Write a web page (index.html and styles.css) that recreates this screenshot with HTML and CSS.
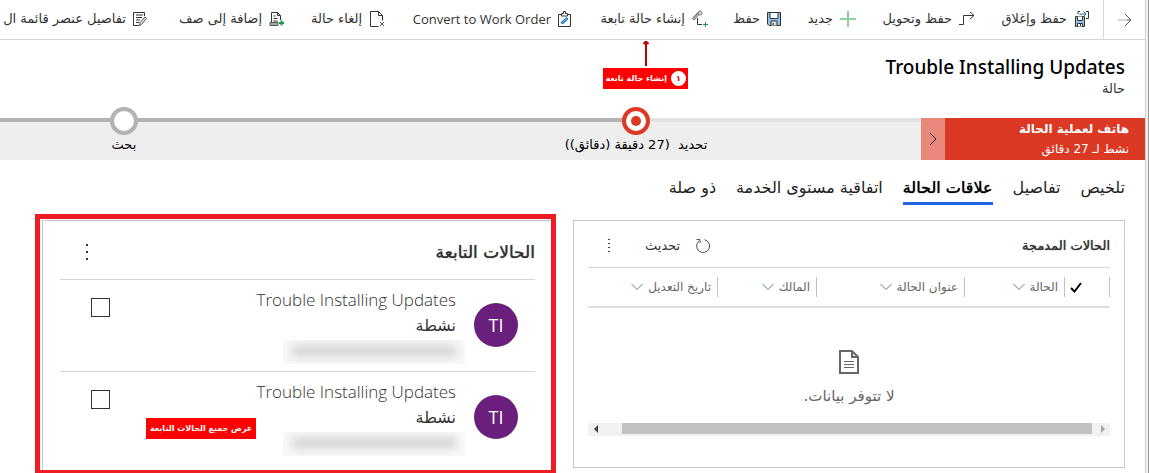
FILE: index.html
```html
<!DOCTYPE html>
<html lang="ar" dir="rtl">
<head>
<meta charset="utf-8">
<title>Trouble Installing Updates</title>
<link rel="stylesheet" href="styles.css">
</head>
<body>
<div class="scroll-strip"></div>
<div class="page">
  <nav class="toolbar">
    <button class="back" aria-label="رجوع"><svg width="16" height="16" viewBox="0 0 16 16"><path d="M1 8h9" stroke="#aaa"/><path d="M10 8h4M8 2l6 6-6 6" stroke="#555"/></svg></button>
    <div class="commands">
      <button class="cmd"><svg width="16" height="18" viewBox="0 0 16 18"><path d="M1.500 6.500h9v10h-9z" fill="#8fc3ea" stroke="#333"/><path d="M3.500 6.500v4h5v-4M3.500 16.500v-3h5v3M6.500 14v2" fill="#fff" stroke="#333"/><path d="M4 4V1.500h2M12 1.500h2.500v7H12" stroke="#333"/><path d="M6 5V4h5M9.500 1.500L12 4 9.500 6.500" stroke="#1b73b8"/></svg><span>حفظ وإغلاق</span></button>
      <button class="cmd"><svg width="16" height="16" viewBox="0 0 16 16"><path d="M0 13.500h4.500v-9H15M11 1l4 3.500L11 8" stroke="#333"/></svg><span>حفظ وتحويل</span></button>
      <button class="cmd"><svg width="16" height="16" viewBox="0 0 16 16"><path d="M8 0v16M0 8h16" stroke="#8fd0a5" stroke-width="2"/></svg><span>جديد</span></button>
      <button class="cmd"><svg width="14" height="16" viewBox="0 0 14 16"><path d="M.5 1.500h13v13H2L.5 13z" fill="#8fc3ea" stroke="#333"/><path d="M3 1.500h8v6H3z" fill="#fff" stroke="#333"/><path d="M4 14.500V10h6v4.500" fill="#ddd" stroke="#333"/><path d="M6 12v2" stroke="#333"/></svg><span>حفظ</span></button>
      <button class="cmd"><svg width="16" height="18" viewBox="0 0 16 18"><path d="M1 9.500L7 3" stroke="#777" stroke-width="3"/><path d="M1.500 9L7.500 3" stroke="#ddd"/><circle cx="8" cy="3" r="2" fill="#ddd" stroke="#777"/><path d="M5.500 8v6.500H10" stroke="#333"/><path d="M13.500 12v5M11 14.500h5" stroke="#1b9e4b"/></svg><span>إنشاء حالة تابعة</span>
        <span class="pointer"><svg width="6" height="25" viewBox="0 0 6 25"><path d="M3 1v24M.5 3L3 .5 5.500 3" stroke="#c00000" stroke-width="2"/></svg><span class="callout"><b class="num">١</b><span>إنشاء حالة تابعة</span></span></span></button>
      <button class="cmd"><svg width="13" height="17" viewBox="0 0 13 17"><path d="M3.500 3.500h-3v12h12v-12h-3" stroke="#333"/><path d="M3.500 5V2.500h2v-2h2v2h2V5z" stroke="#333"/><path d="M3.500 12.500L9.500 7" stroke="#1f6fb5" stroke-width="3"/><path d="M4 12L9 7.500" stroke="#8fc3ea"/></svg><span class="latin">Convert to Work Order</span></button>
      <button class="cmd"><svg width="16" height="18" viewBox="0 0 16 18"><path d="M9.500 16.500h-8V1.500h8l4 4v5M9.500 1.500v4h4" stroke="#333"/><path d="M11 12l4 4M15 12l-4 4" stroke="#456"/></svg><span>إلغاء حالة</span></button>
      <button class="cmd"><svg width="16" height="16" viewBox="0 0 16 16"><path d="M2.500 12V1.500h6l3 3V9M8.500 1.500v3h3M4.500 5h2M4.500 7.500h4M4.500 10h4" stroke="#333"/><path d="M1 11.500h8v3H1z" fill="#aaa" stroke="#555"/><path d="M12.500 9.500v5M10 12h5" stroke="#1b9e4b" stroke-width="2"/></svg><span>إضافة إلى صف</span></button>
      <button class="cmd"><svg width="14" height="16" viewBox="0 0 14 16"><path d="M6 14.500H.5V1.500h11V5M3 4h7M3 6.500h6M3 9h4M3 11.500h3" stroke="#333"/><path d="M6.500 14.500l.5-3L12 6l1.500 1.500-5 6z" fill="#ddd" stroke="#555"/></svg><span>تفاصيل عنصر قائمة ال</span></button>
    </div>
  </nav>

  <header class="record">
    <h1>Trouble Installing Updates</h1>
    <p>حالة</p>
  </header>

  <section class="process">
    <div class="flow-name"><strong>هاتف لعملية الحالة</strong><span>نشط لـ 27 دقائق</span></div>
    <button class="collapse" aria-label="طي"><svg width="8" height="14" viewBox="0 0 8 14"><path d="M1 1l6 6-6 6" stroke="#222"/></svg></button>
    <ol class="stages">
      <li class="stage current"><span class="dot"></span><span>تحديد&nbsp; (27 دقيقة (دقائق))</span></li>
      <li class="stage"><span class="dot"></span><span>بحث</span></li>
    </ol>
  </section>

  <nav class="tabs">
    <button>تلخيص</button><button>تفاصيل</button><button class="active">علاقات الحالة</button><button>اتفاقية مستوى الخدمة</button><button>ذو صلة</button>
  </nav>

  <main class="panels">
    <section class="panel merged">
      <div class="panel-head">
        <h2>الحالات المدمجة</h2>
        <button class="refresh"><svg width="16" height="16" viewBox="0 0 16 16"><path d="M9.500 1.700A6.500 6.500 0 1 1 4 3M1.500 1.500H5V5" stroke="#555"/></svg><span>تحديث</span></button>
        <button class="more" aria-label="المزيد"><svg width="2" height="13" viewBox="0 0 2 13"><path d="M1 0v1M1 4v1M1 8v1M1 12v1" stroke="#444" stroke-width="2"/></svg></button>
      </div>
      <table>
        <thead><tr>
          <th class="c-check"><div><svg width="12" height="11" viewBox="0 0 12 11"><path d="M1 6l3.500 3.500L11 1" stroke="#000" stroke-width="2"/></svg></div></th>
          <th class="c-state"><div>الحالة<svg width="12" height="8" viewBox="0 0 12 8"><path d="M.5 1L6 6.500 11.500 1" stroke="#5b7f9c"/></svg></div></th>
          <th class="c-title"><div>عنوان الحالة<svg width="12" height="8" viewBox="0 0 12 8"><path d="M.5 1L6 6.500 11.500 1" stroke="#777"/></svg></div></th>
          <th class="c-owner"><div>المالك<svg width="12" height="8" viewBox="0 0 12 8"><path d="M.5 1L6 6.500 11.500 1" stroke="#5b7f9c"/></svg></div></th>
          <th><div>تاريخ التعديل<svg width="12" height="8" viewBox="0 0 12 8"><path d="M.5 1L6 6.500 11.500 1" stroke="#5b7f9c"/></svg></div></th>
        </tr></thead>
      </table>
      <div class="empty">
        <svg width="20" height="24" viewBox="0 0 20 24"><path d="M1 1h12l6 6v16H1zM13 1v6h6" stroke="#666" stroke-width="2"/><path d="M5 11.500h10M5 14.500h10M5 17.500h10" stroke="#666"/></svg>
        <p>لا تتوفر بيانات.</p>
      </div>
      <div class="hscroll">
        <svg width="5" height="8" viewBox="0 0 5 8"><path d="M0 0l4 4-4 4z" fill="#a3a3a3"/></svg>
        <div class="thumb"></div>
        <svg width="5" height="8" viewBox="0 0 5 8"><path d="M5 0L1 4l4 4z" fill="#444"/></svg>
      </div>
    </section>

    <div class="highlight">
      <section class="panel child">
        <div class="panel-head">
          <h2>الحالات التابعة</h2>
          <button class="more" aria-label="المزيد"><svg width="2" height="16" viewBox="0 0 2 16"><path d="M1 0v2M1 7v2M1 14v2" stroke="#333" stroke-width="2"/></svg></button>
        </div>
        <ul>
          <li class="case"><span class="avatar">TI</span>
            <div class="info"><h3 class="latin">Trouble Installing Updates</h3><p>نشطة</p><div class="redacted"><i></i></div></div>
            <input type="checkbox" aria-label="Trouble Installing Updates"></li>
          <li class="case"><span class="avatar">TI</span>
            <div class="info"><h3 class="latin">Trouble Installing Updates</h3><p>نشطة</p><div class="redacted"><i></i></div></div>
            <input type="checkbox" aria-label="Trouble Installing Updates">
            <span class="callout note">عرض جميع الحالات التابعة</span></li>
        </ul>
      </section>
    </div>
  </main>
</div>
</body>
</html>
```
FILE: styles.css
```css
* { box-sizing: border-box; margin: 0; padding: 0; }
body {
  display: flex;
  height: 100vh;
  overflow: hidden;
  background: #fff;
  color: #333;
  font: 13px/20px "DejaVu Sans", sans-serif;
}
button { border: 0; background: none; font: inherit; color: inherit; white-space: nowrap; }
svg { display: block; flex: none; fill: none; }
ul, ol { list-style: none; }
.latin { font-family: "Open Sans", "Noto Sans", sans-serif; direction: ltr; }

.scroll-strip { flex: none; width: 4px; background: #f1f1f1; border-left: 1px solid #d0d0d0; border-right: 1px solid #999; }
.page { flex: 1; min-width: 0; overflow: hidden; }

.toolbar { display: flex; height: 40px; border-bottom: 1px solid #d6d6d6; }
.back { flex: none; display: grid; place-items: center; width: 42px; border-left: 1px solid #d6d6d6; }
.commands {
  flex: 1;
  display: grid;
  grid-template-columns: 115px 119px 75px 73px 137px 186px 100px 138px 160px;
  padding-right: 13px;
}
.cmd { position: relative; display: flex; align-items: center; gap: 7px; height: 38px; }
.cmd .latin { font-size: 13px; }
.pointer { position: absolute; top: 41px; right: 20px; display: flex; flex-direction: column; align-items: center; gap: 2px; }
.callout {
  display: flex;
  align-items: center;
  gap: 4px;
  height: 21px;
  padding: 0 2px;
  background: #f00;
  color: #fff;
  font-size: 8px;
  font-weight: bold;
  white-space: nowrap;
}
.num { width: 15px; height: 15px; border-radius: 50%; background: #fff; color: #c00000; line-height: 15px; text-align: center; }

.record { padding: 15px 20px 0; height: 78px; color: #000; }
.record h1 { font: 500 19px/24px "Noto Sans", sans-serif; }
.record p { color: #333; }

.process { display: flex; height: 42px; background: #eee; color: #000; }
.flow-name { flex: none; display: flex; flex-direction: column; justify-content: center; width: 200px; padding-right: 16px; background: #dc3925; color: #fff; font-size: 12px; }
.collapse { flex: none; display: grid; place-items: center; width: 24px; background: #e9877a; }
.stages { flex: 1; display: flex; min-width: 0; padding-right: 29px; border-top: 4px solid #e2e2e2; }
.stage { position: relative; flex: none; display: flex; flex-direction: column; align-items: center; width: 512px; }
.stage::before { content: ""; position: absolute; top: -4px; left: 0; width: 100%; height: 4px; background: #b3b3b3; }
.stage.current::before { width: 50%; }
.dot { z-index: 1; display: grid; place-items: center; width: 28px; height: 28px; margin-top: -15px; border: 4px solid #b3b3b3; border-radius: 50%; background: #fff; }
.current .dot { border-color: #dc3925; }
.current .dot::after { content: ""; width: 10px; height: 10px; border-radius: 50%; background: #dc3925; }

.tabs { display: flex; gap: 20px; height: 45px; margin-top: 14px; padding: 0 20px; }
.tabs button { height: 31px; color: #222; font-size: 16px; border-bottom: 3px solid transparent; }
.tabs .active { border-color: #2266e3; color: #000; text-shadow: 0 0 1px #000; }

.panels { display: grid; grid-template-columns: 552fr 521fr; gap: 17px; align-items: start; padding: 0 20px 0 35px; }
.panel { border: 1px solid #c8c8c8; }
.merged { margin-top: 1px; padding: 0 14px 31px; }
.panel-head { display: flex; align-items: center; border-bottom: 1px solid #d6d6d6; }
.panel-head h2 { flex: 1; font-size: 13px; font-weight: normal; text-shadow: 0 0 1px #333; }
.merged .panel-head { height: 47px; padding-top: 3px; }
.refresh { display: flex; align-items: center; gap: 15px; }
.merged .more { margin-right: 35px; margin-left: 20px; }
table { width: 100%; table-layout: fixed; border-collapse: collapse; border-bottom: 2px solid #ddd; }
th { height: 39px; font-size: 12px; font-weight: normal; color: #666; }
th div { display: flex; align-items: center; gap: 5px; height: 20px; padding-right: 6px; border-right: 1px solid #c0c0c0; white-space: nowrap; }
.c-check { width: 45px; }
.c-check div { justify-content: flex-end; padding-left: 5px; }
.c-state { width: 100px; }
.c-title { width: 148px; }
.c-owner { width: 99px; }
.empty { display: flex; flex-direction: column; align-items: center; gap: 12px; padding-top: 42px; color: #666; font-size: 15px; }
.hscroll { display: flex; align-items: center; gap: 9px; height: 13px; margin-top: 17px; padding: 0 4px 2px 5px; background: #f1f1f1; }
.thumb { flex: 1; height: 11px; margin-left: 15px; background: #c1c1c1; }

.highlight { margin-top: -5px; padding: 1px 0 0 2px; border: 5px solid #ee1c25; }
.child { padding: 0 16px 0 17px; border-width: 1px 0 0 1px; }
.child .panel-head { height: 59px; padding-top: 4px; }
.child h2 { font-size: 17px; }
.child .more { margin-left: 26px; }
.case { position: relative; display: flex; height: 92px; padding: 8px 17px 0 31px; border-bottom: 1px solid #d6d6d6; }
.case:last-child { height: 98px; border: 0; }
.avatar { flex: none; width: 44px; height: 44px; margin: 15px 0 0 9px; border-radius: 50%; background: #6b1f7c; color: #fff; font: 500 18px/44px "Open Sans", sans-serif; text-align: center; }
.info { flex: 1; margin-right: 9px; }
.info h3 { font-size: 17px; font-weight: 300; line-height: 24px; text-align: right; }
.info p { font-size: 16px; line-height: 28px; }
.redacted { width: 182px; height: 24px; margin-right: -9px; padding: 6px 9px; background: #f8f8f8; overflow: hidden; }
.redacted i { display: block; height: 10px; background: #d0d0d0; filter: blur(5px); }
.case input { appearance: none; flex: none; width: 19px; height: 19px; margin-top: 10px; border: 1px solid #333; background: #fff; }
.note { position: absolute; top: 46px; left: 86px; padding: 0 4px; }
```
